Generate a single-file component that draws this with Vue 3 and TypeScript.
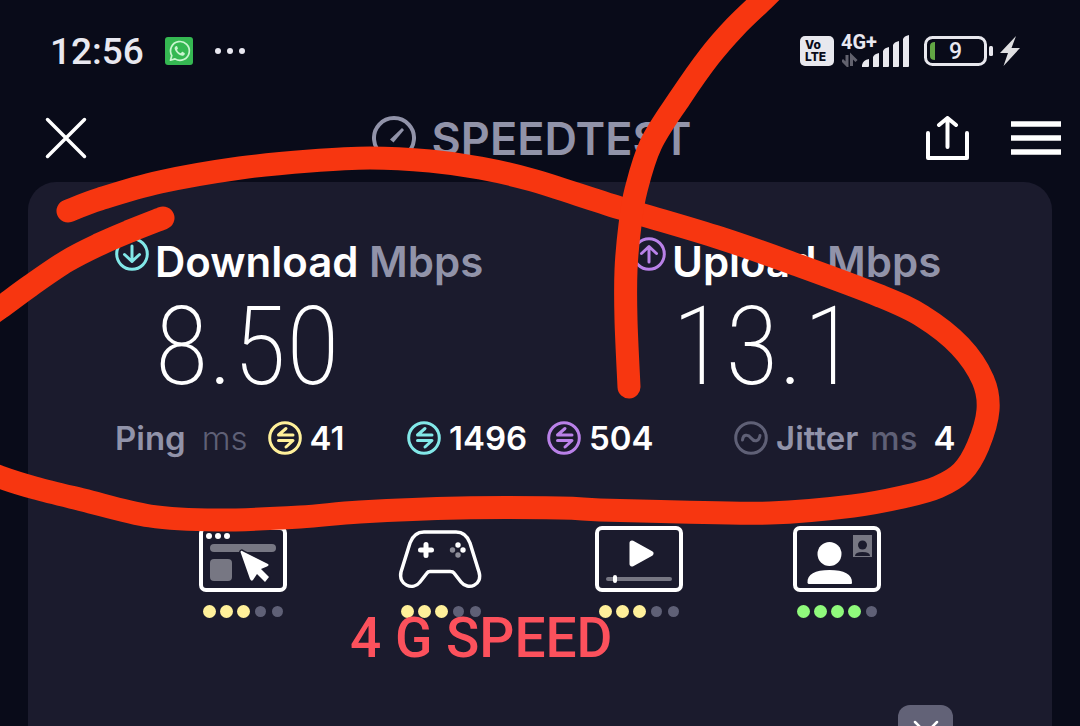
<script setup lang="ts">
interface Service {
  name: string
  kind: 'web' | 'gaming' | 'video' | 'call'
  score: number
}

interface Metric {
  label: string
  value: string
  kind: 'download' | 'upload'
}

type Point = [number, number]

const metrics: Metric[] = [
  { label: 'Download', value: '8.50', kind: 'download' },
  { label: 'Upload', value: '13.1', kind: 'upload' },
]

const services: Service[] = [
  { name: 'Web browsing', kind: 'web', score: 3 },
  { name: 'Gaming', kind: 'gaming', score: 3 },
  { name: 'Video streaming', kind: 'video', score: 3 },
  { name: 'Video call', kind: 'call', score: 4 },
]

const penStrokes: Point[][] = [
  [
    [68, 211], [100, 199], [160, 182], [240, 168], [310, 161], [370, 158], [430, 161],
    [480, 168], [532, 180], [620, 208], [720, 238], [800, 266], [880, 296], [922, 316],
    [960, 346], [983, 380], [988, 410], [978, 446], [962, 472], [938, 487], [907, 496],
    [853, 506], [770, 513], [680, 512], [600, 510], [560, 508], [460, 508], [360, 512],
    [300, 517], [217, 520], [150, 516], [83, 500], [35, 488], [0, 477], [-20, 468],
  ],
  [[163, 218], [130, 231], [100, 244], [67, 261], [30, 286], [0, 308], [-20, 322]],
  [
    [775, -12], [763, 0], [735, 27], [709, 57], [680, 98], [651, 144], [636, 190],
    [630, 225], [626, 270], [626, 320], [629, 387],
  ],
]

/* Joins the sampled pen positions with a Catmull-Rom curve. */
function smooth(points: Point[]): string {
  let d = `M${points[0][0]} ${points[0][1]}`
  for (let i = 0; i < points.length - 1; i++) {
    const p0 = points[Math.max(i - 1, 0)]
    const p1 = points[i]
    const p2 = points[i + 1]
    const p3 = points[Math.min(i + 2, points.length - 1)]
    d += `C${p1[0] + (p2[0] - p0[0]) / 6} ${p1[1] + (p2[1] - p0[1]) / 6} `
    d += `${p2[0] - (p3[0] - p1[0]) / 6} ${p2[1] - (p3[1] - p1[1]) / 6} ${p2[0]} ${p2[1]}`
  }
  return d
}
</script>

<template>
  <div class="screen">
    <div class="status">
      <time class="clock">12:56</time>
      <svg class="whatsapp" viewBox="0 0 28 28" width="28" height="28" aria-hidden="true">
        <rect width="28" height="28" rx="3" fill="#35b852" />
        <path d="M5.500 23.200 6.800 18.600A9.400 9.400 0 1 1 10 21.900Z" fill="none" stroke="#c9f5cf" stroke-width="1.700" stroke-linejoin="round" />
        <path d="M10.800 9.200c.6-.4 1.200-.2 1.400.4l.7 1.700c.2.5-.6 1.100-.9 1.500.8 1.800 2 2.800 3.800 3.500l1.100-1.200c.3-.3.6-.3.9-.1l1.700.9c.8.5.1 2-1 2.600-1.500.7-4.300-.4-6.100-2.200-1.900-1.900-3.400-4.700-2.600-6.100.3-.5.600-.8 1-1Z" fill="#c9f5cf" />
      </svg>
      <svg class="more" viewBox="0 0 32 8" width="32" height="8" aria-hidden="true">
        <g fill="#e8e8f0"><circle cx="4" cy="4" r="3" /><circle cx="16" cy="4" r="3" /><circle cx="28" cy="4" r="3" /></g>
      </svg>
      <div class="system">
        <span class="volte"><span>Vo</span><span>LTE</span></span>
        <span class="network">
          <span class="generation">4G+</span>
          <svg viewBox="0 0 68 32" width="68" height="32" aria-hidden="true">
            <path d="M5 20V30L0 25M9.500 31V21L14.500 26" fill="none" stroke="#62626e" stroke-width="3" />
            <g fill="#e8e8ee">
              <path d="M20 32V30Q21 25 27 24V31Q27 32 26 32Z" />
              <path d="M31 32V22Q32 19 37 18V31Q37 32 36 32Z" />
              <path d="M41 32V16Q42 13 47 12V31Q47 32 46 32Z" />
              <path d="M51 32V10Q52 7 57 6V31Q57 32 56 32Z" />
              <path d="M61 32V4Q62 1 67 0V31Q67 32 66 32Z" />
            </g>
          </svg>
        </span>
        <span class="battery">
          <svg viewBox="0 0 70 30" width="70" height="30" aria-hidden="true">
            <rect x="1.500" y="1.500" width="60" height="27" rx="7" fill="none" stroke="#e8e8ee" stroke-width="3" />
            <path d="M11 6V24Q6 24 6 20V10Q6 6 11 6Z" fill="#62a744" />
            <rect x="65" y="10" width="4" height="10" rx="1.500" fill="#e8e8ee" />
          </svg>
          <span class="charge">9</span>
        </span>
        <svg viewBox="0 0 20 30" width="20" height="30" aria-hidden="true">
          <path d="M16 0 0 17H8L3.500 30 20 12H11.500Z" fill="#e0e0e2" />
        </svg>
      </div>
    </div>

    <header class="header">
      <button class="icon-button close" type="button" aria-label="Close">
        <svg viewBox="0 0 44 44" width="44" height="44"><path d="M3.500 3.500 40.500 40.500M40.500 3.500 3.500 40.500" stroke="#fff" stroke-width="3.500" stroke-linecap="round" /></svg>
      </button>
      <div class="brand">
        <svg viewBox="0 0 44 44" width="44" height="44" aria-hidden="true">
          <path d="M10 38A20 20 0 1 1 34 38" fill="none" stroke="#9193a9" stroke-width="4" />
          <path d="M18 23.500 30 12 32 14 21.500 26.500Z" fill="#9193a9" />
        </svg>
        <span>SPEEDTEST</span>
      </div>
      <div class="actions">
        <button class="icon-button" type="button" aria-label="Share">
          <svg viewBox="0 0 43 44" width="43" height="44" fill="none" stroke="#fff" stroke-width="4" stroke-linecap="round" stroke-linejoin="round">
            <path d="M2 17V42H41V17" /><path d="M21.500 31V2M13 9 21.500 2 30 9" />
          </svg>
        </button>
        <button class="icon-button" type="button" aria-label="Menu">
          <svg viewBox="0 0 50 34" width="50" height="34"><path d="M0 3H50M0 17H50M0 31H50" stroke="#fff" stroke-width="5.500" /></svg>
        </button>
      </div>
    </header>

    <main class="card">
      <section class="metrics">
        <div v-for="m in metrics" :key="m.kind" class="metric" :class="m.kind">
          <svg class="round" viewBox="0 0 34 34" width="34" height="34" aria-hidden="true">
            <circle cx="17" cy="17" r="15.300" />
            <path v-if="m.kind === 'download'" d="M17 9V24.500M9.500 17.500 17 24.500 24.500 17.500" />
            <path v-else d="M17 25V9.500M9.500 16.500 17 9.500 24.500 16.500" />
          </svg>
          <div>
            <h2 class="metric-title">{{ m.label }} <span>Mbps</span></h2>
            <p class="metric-value">{{ m.value }}</p>
          </div>
        </div>
      </section>

      <section class="latency">
        <div class="reading idle">
          <span class="name">Ping</span><span class="unit">ms</span>
          <svg class="round" viewBox="0 0 34 34" width="34" height="34" aria-hidden="true">
            <circle cx="17" cy="17" r="15.300" /><path d="M25 14H10.500L18 7.500M10.500 19.500H25L18 26" />
          </svg>
          <strong>41</strong>
        </div>
        <div class="reading download">
          <svg class="round" viewBox="0 0 34 34" width="34" height="34" aria-hidden="true">
            <circle cx="17" cy="17" r="15.300" /><path d="M25 14H10.500L18 7.500M10.500 19.500H25L18 26" />
          </svg>
          <strong>1496</strong>
        </div>
        <div class="reading upload">
          <svg class="round" viewBox="0 0 34 34" width="34" height="34" aria-hidden="true">
            <circle cx="17" cy="17" r="15.300" /><path d="M25 14H10.500L18 7.500M10.500 19.500H25L18 26" />
          </svg>
          <strong>504</strong>
        </div>
        <div class="reading jitter">
          <svg class="round" viewBox="0 0 34 34" width="34" height="34" aria-hidden="true">
            <circle cx="17" cy="17" r="15.300" /><path d="M8.500 19C9 13 14 13 17 17S25 21 26 14.500" />
          </svg>
          <span class="name">Jitter</span><span class="unit">ms</span>
          <strong>4</strong>
        </div>
      </section>

      <ul class="services">
        <li v-for="s in services" :key="s.kind">
          <svg viewBox="0 0 88 66" width="88" height="66" role="img" :aria-label="s.name">
            <rect v-if="s.kind !== 'gaming'" x="2" y="2" width="84" height="62" rx="5" fill="none" stroke="#fff" stroke-width="4" />
            <template v-if="s.kind === 'web'">
              <g fill="#fff"><circle cx="10" cy="10" r="3" /><circle cx="19" cy="10" r="3" /><circle cx="28" cy="10" r="3" /></g>
              <rect x="11" y="18" width="66" height="8" rx="4" fill="#777783" />
              <rect x="11" y="33" width="22" height="22" rx="4" fill="#777783" />
              <path d="M41.500 26Q42 24 44 25.500L69 38Q70.500 39.500 68 40.500L62 43 70 51 66 56 58 48 54 54Q52.500 56 51 53Z" fill="#fff" stroke="#1b1b2d" stroke-width="3" paint-order="stroke" />
            </template>
            <template v-else-if="s.kind === 'gaming'">
              <path d="M27 6H59Q69 6 73 17L82 46C86 59 71 65 64 56L57 47Q56 45.500 53 45.500H33Q31 45.500 30 47L23 56C16 65 1 59 4 46L13 17Q17 6 27 6Z" fill="none" stroke="#fff" stroke-width="3.500" />
              <path d="M29 18.500V29.500M23.500 24H34.500" stroke="#fff" stroke-width="5" stroke-linecap="round" />
              <circle cx="61" cy="19" r="2.700" fill="#fff" /><circle cx="66" cy="24" r="2.700" fill="#fff" />
              <circle cx="55.500" cy="24" r="2.700" fill="#8d8d98" /><circle cx="61" cy="29" r="2.700" fill="#8d8d98" />
            </template>
            <template v-else-if="s.kind === 'video'">
              <path d="M37 17 56 27.500 37 38Z" fill="#fff" stroke="#fff" stroke-width="5" stroke-linejoin="round" />
              <rect x="11" y="51" width="66" height="4" rx="2" fill="#777783" />
              <rect x="18" y="49" width="4" height="8" rx="2" fill="#fff" />
            </template>
            <template v-else>
              <circle cx="36.500" cy="28" r="12" fill="#fff" />
              <path d="M14.500 57C14 48 22 44 36.500 44S59.500 48 59 57Q59 58 58 58H15.500Z" fill="#fff" />
              <rect x="60" y="9" width="19" height="22" fill="#777783" />
              <circle cx="69.500" cy="19" r="4.500" fill="#1b1b2d" />
              <path d="M62 30Q62 26 69.500 26T77 30Z" fill="#1b1b2d" />
            </template>
          </svg>
          <div class="dots" :class="{ good: s.score > 3 }" role="img" :aria-label="`${s.score} / 5`">
            <span v-for="n in 5" :key="n"><i :class="{ on: n <= s.score }"></i></span>
          </div>
        </li>
      </ul>

      <button class="dismiss" type="button" aria-label="Dismiss">
        <svg viewBox="0 0 28 28" width="28" height="28"><path d="M3 3 25 25M25 3 3 25" stroke="#fff" stroke-width="2.500" stroke-linecap="round" /></svg>
      </button>
    </main>

    <div class="markup">
      <svg viewBox="0 0 1080 726" aria-hidden="true">
        <g fill="none" stroke="#f73610" stroke-width="23" stroke-linecap="round" stroke-linejoin="round">
          <path v-for="(points, i) in penStrokes" :key="i" :d="smooth(points)" />
        </g>
      </svg>
      <p class="note">4 G SPEED</p>
    </div>
  </div>
</template>

<style>
body {
  margin: 0;
  background: #090b19;
}
</style>

<style scoped>
.screen {
  position: relative;
  height: 100vh;
  overflow: hidden;
  background: #090b19;
  color: #fff;
  font-family: Inter, "Open Sans", "Liberation Sans", sans-serif;
}
h2, p, ul {
  margin: 0;
  padding: 0;
}
svg {
  display: block;
  flex: none;
}
.status {
  display: flex;
  align-items: center;
  height: 102px;
  padding: 0 60px 0 50px;
  font-family: Roboto, "Liberation Sans", sans-serif;
  color: #e8e8f0;
}
.clock {
  font-size: 37px;
  font-weight: 500;
}
.whatsapp {
  margin-left: 21px;
}
.more {
  margin-left: 21px;
}
.system {
  display: flex;
  align-items: center;
  margin-left: auto;
}
.volte {
  display: flex;
  flex-direction: column;
  justify-content: center;
  box-sizing: border-box;
  width: 34px;
  height: 30px;
  padding-left: 5px;
  border-radius: 5px;
  background: #e8e8ee;
  color: #090b19;
  font-family: Inter, sans-serif;
  font-size: 12px;
  font-weight: 800;
  line-height: 12px;
}
.network {
  position: relative;
  margin-left: 8px;
}
.generation {
  position: absolute;
  left: -1px;
  top: -5px;
  font-size: 20px;
  font-weight: 700;
  line-height: 24px;
}
.battery {
  position: relative;
  margin: 0 6px 0 14px;
}
.charge {
  position: absolute;
  inset: 0 7px 0 0;
  text-align: center;
  font-size: 23px;
  font-weight: 500;
  line-height: 32px;
}
.header {
  display: grid;
  grid-template-columns: 1fr auto 1fr;
  align-items: center;
  height: 72px;
  padding: 0 19px 0 2px;
}
.icon-button {
  padding: 0;
  border: 0;
  background: none;
}
.close {
  justify-self: start;
  margin-left: 42px;
}
.brand {
  display: flex;
  align-items: center;
  gap: 16px;
  color: #9193a9;
  font-size: 45px;
  font-weight: 600;
}
.actions {
  display: flex;
  align-items: center;
  justify-content: flex-end;
  gap: 42px;
}
.card {
  margin: 8px 28px 0;
  padding-top: 55px;
  border-radius: 28px 28px 0 0;
  background: #1b1b2d;
}
.metrics {
  display: grid;
  grid-template-columns: 517fr 420fr;
  padding-left: 87px;
}
.metric {
  display: flex;
  align-items: flex-start;
  gap: 6px;
}
.round {
  fill: none;
  stroke: currentColor;
  stroke-width: 3;
  stroke-linecap: round;
  stroke-linejoin: round;
}
.download .round {
  color: #82e8e8;
}
.upload .round {
  color: #b981e8;
}
.idle .round {
  color: #fff09a;
}
.jitter .round {
  color: #5f6076;
}
.metric-title {
  font-size: 42px;
  font-weight: 600;
  line-height: 50px;
  white-space: nowrap;
}
.metric-title span,
.name {
  color: #9193a9;
}
.metric-value {
  margin-top: 16px;
  font-family: "Roboto Condensed", Roboto, "Liberation Sans", sans-serif;
  font-size: 110px;
  font-weight: 200;
  line-height: 88px;
}
.latency {
  display: grid;
  grid-template-columns: 292fr 140fr 187fr 318fr;
  margin-top: 30px;
  padding-left: 87px;
}
.reading {
  display: flex;
  align-items: center;
  gap: 8px;
  font-size: 33px;
  font-weight: 600;
  line-height: 34px;
}
.reading strong {
  font-weight: 600;
}
.name {
  margin-right: 4px;
}
.unit {
  margin-right: 8px;
  color: #5f6076;
  font-weight: 500;
}
.idle .name {
  margin-right: 8px;
}
.idle .unit {
  margin-right: 12px;
  font-weight: 300;
}
.services {
  display: grid;
  grid-template-columns: repeat(4, 1fr);
  max-width: 792px;
  margin: 71px auto 0;
  list-style: none;
}
.services li {
  display: flex;
  flex-direction: column;
  align-items: center;
  gap: 11px;
}
.dots {
  display: flex;
  gap: 3px;
}
.dots span {
  display: grid;
  place-items: center;
  width: 14px;
  height: 16px;
}
.dots i {
  width: 11px;
  height: 11px;
  border-radius: 50%;
  background: #5f6076;
}
.dots .on {
  width: 13px;
  height: 13px;
  background: #fff09a;
}
.good .on {
  background: #90fa7c;
}
.dismiss {
  display: grid;
  place-items: center;
  width: 55px;
  height: 55px;
  margin: 86px 99px 0 auto;
  padding: 0;
  border: 0;
  border-radius: 12px;
  background: #626277;
}
.markup {
  position: absolute;
  inset: 0;
  pointer-events: none;
}
.markup svg {
  width: 100%;
}
.note {
  position: absolute;
  left: 350px;
  top: 606px;
  color: #fc515c;
  font-family: Roboto, "Liberation Sans", sans-serif;
  font-size: 55px;
  font-weight: 500;
  line-height: 64px;
  white-space: nowrap;
}
</style>
